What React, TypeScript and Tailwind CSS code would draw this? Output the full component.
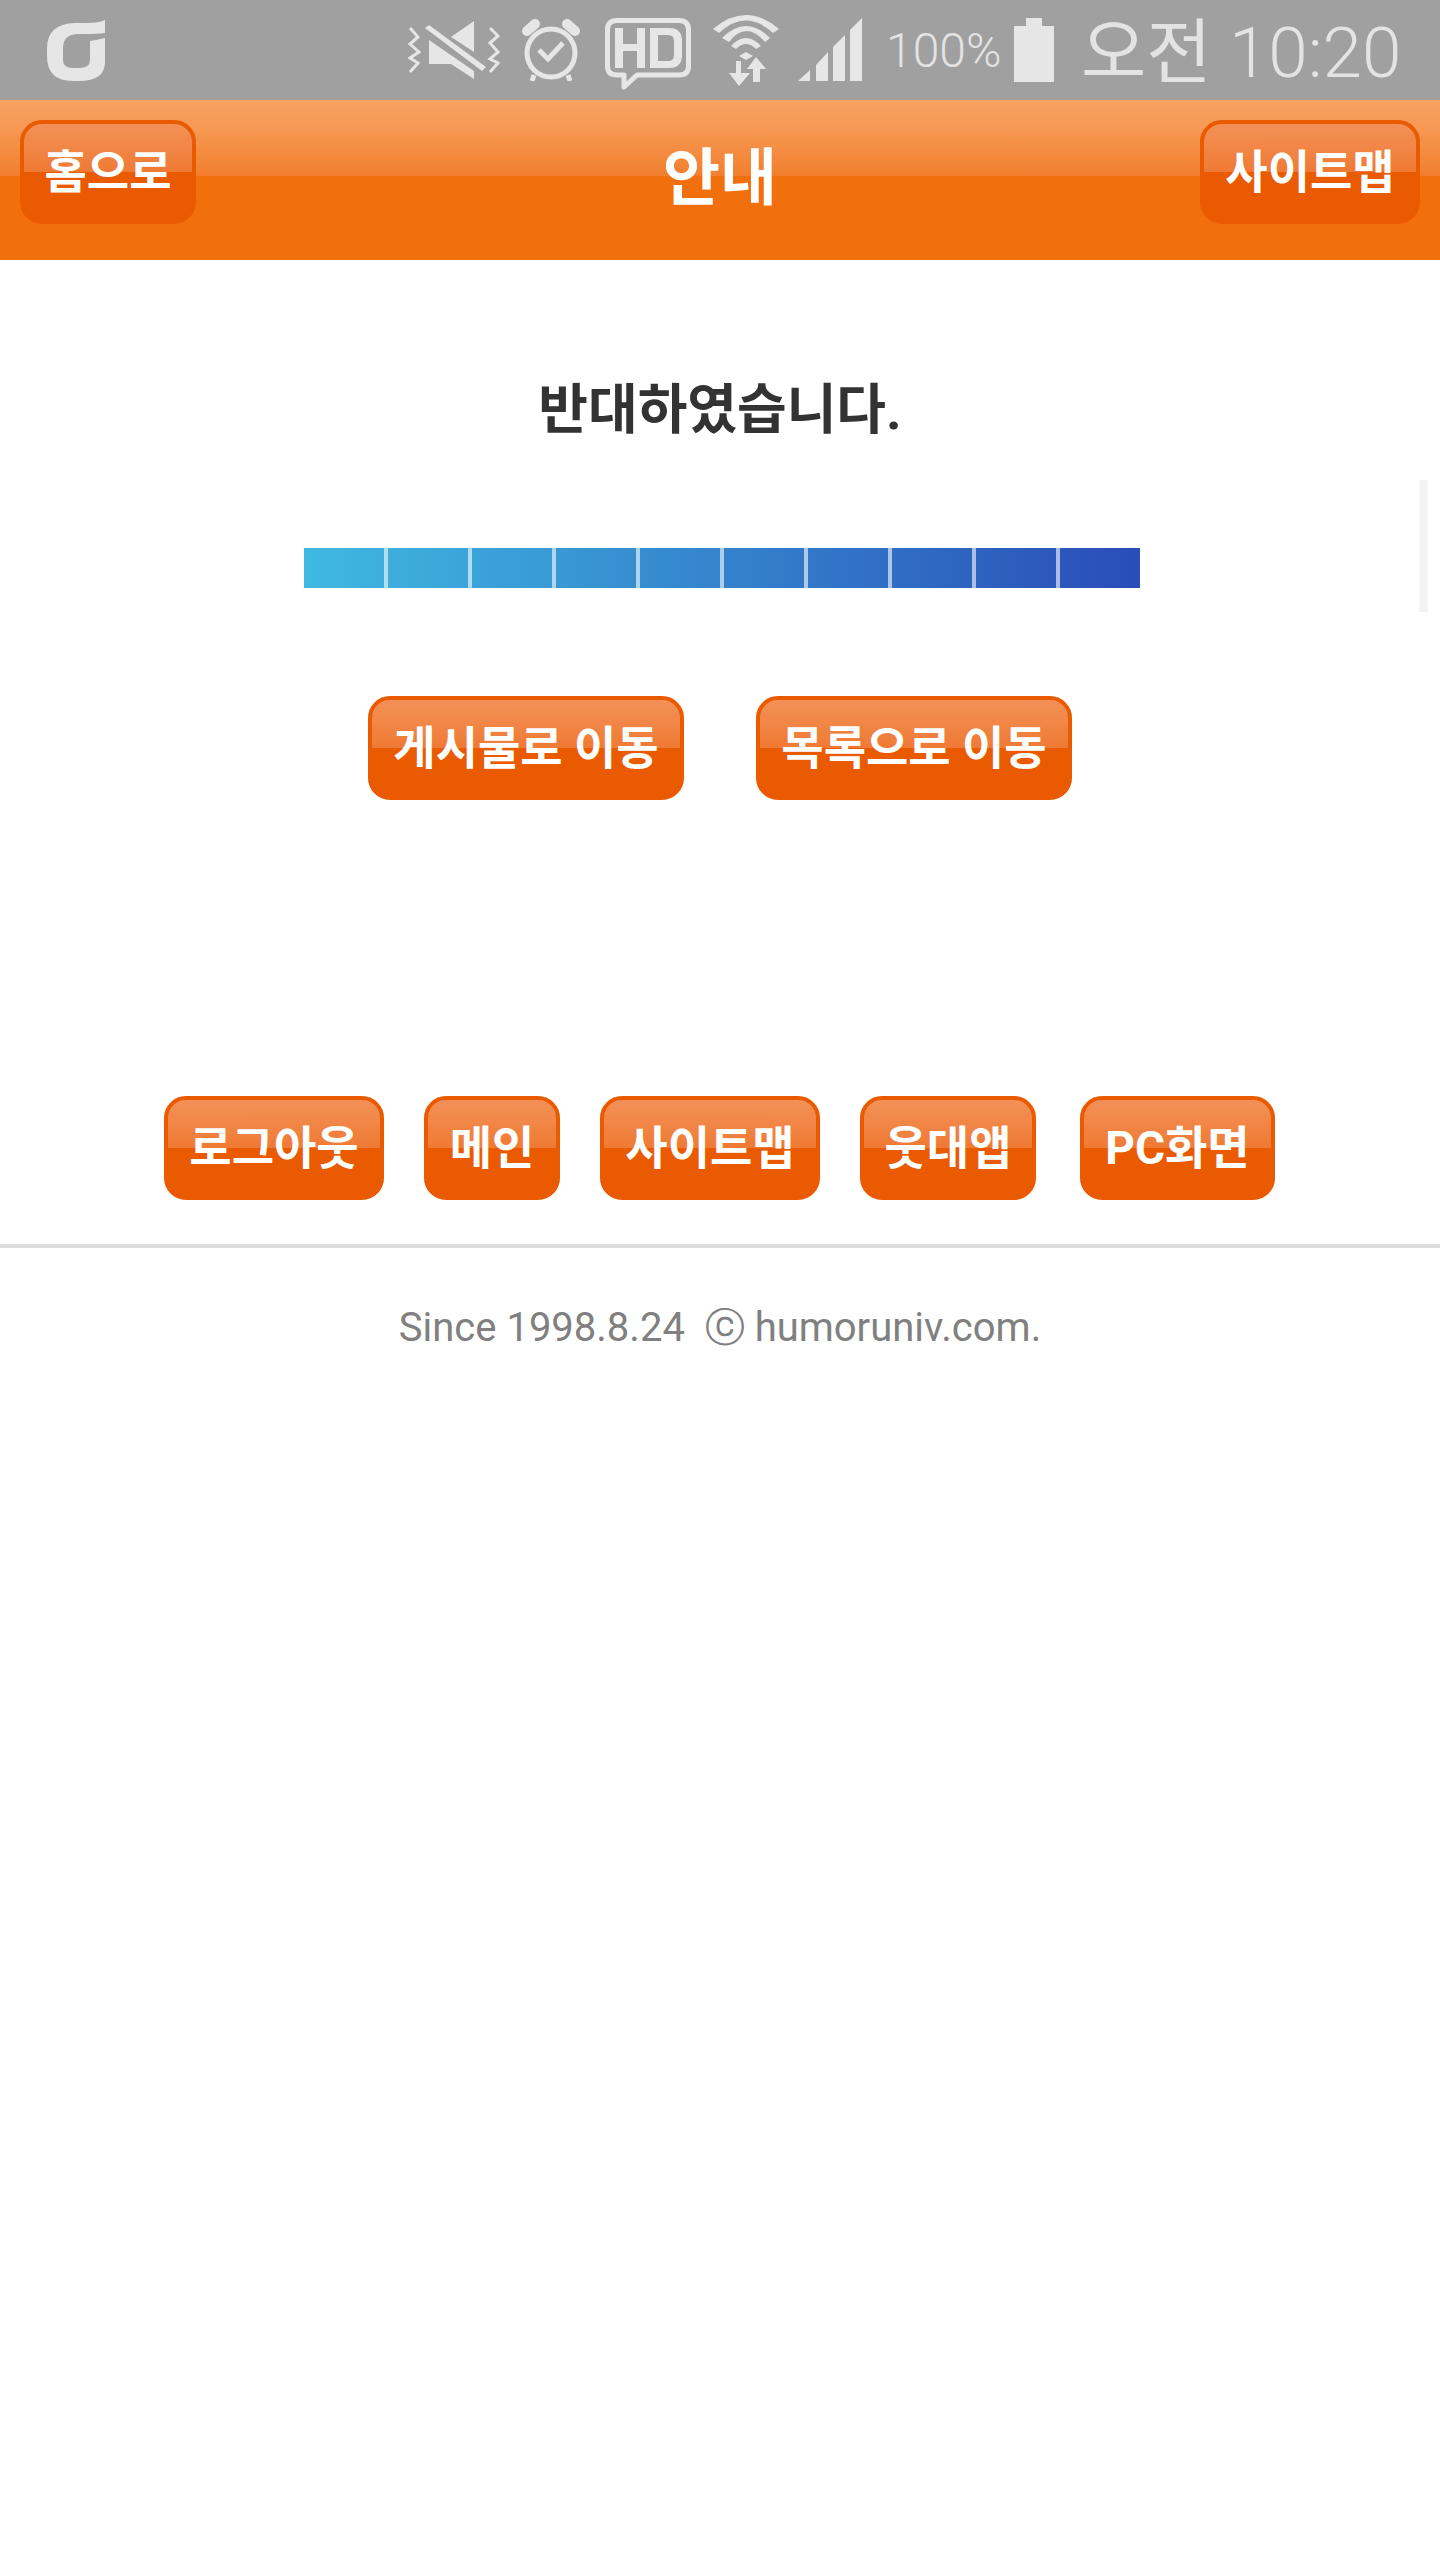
const KR = "font-['Roboto','Noto_Sans_CJK_KR','Noto_Sans',sans-serif]";

function OrangeButton({ label, className }: { label: string; className: string }) {
  return (
    <div
      className={`flex h-[104px] items-center justify-center rounded-[22px] border-4 border-[#ea5a00] bg-[linear-gradient(to_bottom,#f39158_0%,#ef7a34_48px,#ea5a00_48px,#ea5a00_100%)] text-[46px] font-bold leading-none text-white ${KR} ${className}`}
    >
      {label}
    </div>
  );
}

function StatusIcons() {
  return (
    <div className="flex items-center">
      <svg width="92" height="60" viewBox="0 0 92 60" fill="#e6e6e6" className="ml-[408px]">
        <path d="M66 1 V32 L43 17 Z" />
        <path d="M21 20 L66 51 V59 L43 44 H21 Z" />
        <path d="M17 8 L21 5 L78 47 L74 51 Z" />
        <path d="M2 8 L10 17 L2 24 L11 32 L2 38 L10 43 L2 52" fill="none" stroke="#e6e6e6" strokeWidth="3" />
        <path d="M82 8 L90 16 L82 23 L90 32 L82 39 L90 43 L82 52" fill="none" stroke="#e6e6e6" strokeWidth="3" />
      </svg>
      <svg width="60" height="62" viewBox="0 0 60 62" fill="none" className="ml-[21px]">
        <circle cx="30" cy="34" r="24" stroke="#e6e6e6" strokeWidth="5" />
        <path d="M6 12 L14 5 M54 12 L46 5" stroke="#e6e6e6" strokeWidth="10" strokeLinecap="round" />
        <path d="M18 31 L27 40 L42 24" stroke="#e6e6e6" strokeWidth="5" />
        <path d="M13 56 L11 62 M47 56 L49 62" stroke="#e6e6e6" strokeWidth="5" />
      </svg>
      <svg width="86" height="72" viewBox="0 0 86 72" fill="none" className="ml-[24px] mt-[8px]">
        <path d="M12 2.5 H74 Q83.5 2.5 83.5 12 V48 Q83.5 57 74 57 H32 L19 69 V57 H12 Q2.5 57 2.5 48 V12 Q2.5 2.5 12 2.5 Z" stroke="#e6e6e6" strokeWidth="5" strokeLinejoin="round" />
        <path d="M10 10 H18 V26 H32 V10 H40 V50 H32 V33 H18 V50 H10 Z" fill="#e6e6e6" />
        <path d="M45 10 H64 Q77 10 77 23 V37 Q77 50 64 50 H45 Z M53 17 V43 H63 Q69 43 69 37 V23 Q69 17 63 17 Z" fill="#e6e6e6" fillRule="evenodd" />
      </svg>
      <svg width="66" height="71" viewBox="0 0 66 71" fill="#e6e6e6" className="ml-[22px]">
        <path d="M0 14 Q33 -14 66 14 L60 18 Q33 -7 6 18 Z" />
        <path d="M9 23 Q33 -1 57 23 L52 27 Q33 5 16 27 Z" />
        <path d="M18 31 Q33 15 48 31 L43 34 Q33 24 23 34 Z" />
        <path d="M26 41 L33 37 L40 41 L33 45 Z" />
        <path d="M23 46 H28 V58 H37 L26 71 L16 58 H23 Z" />
        <path d="M43 42 L53 54 H47 V67 H40 V54 H34 Z" />
      </svg>
      <svg width="64" height="64" viewBox="0 0 64 64" fill="#e6e6e6" className="ml-[19px]">
        <path d="M0 63 L12 52 V63 Z" />
        <path d="M18 47 L30 34 V63 H18 Z" />
        <path d="M35 29 L47 17 V63 H35 Z" />
        <path d="M52 12 L64 0 V63 H52 Z" />
      </svg>
      <span className="ml-[24px] mt-[2px] w-[128px] font-['Roboto',sans-serif] text-[48px] font-light leading-none text-[#e3e3e3]">100%</span>
      <svg width="40" height="64" viewBox="0 0 40 64" fill="#e6e6e6">
        <path d="M12 0 H28 V8 H40 V64 H0 V8 H12 Z" />
      </svg>
      <span className="ml-[27px] mt-[5px] font-['Roboto','Noto_Sans_CJK_KR',sans-serif] text-[71px] font-light leading-none text-[#e3e3e3]">
        <span className="font-normal">오전</span> 10:20
      </span>
    </div>
  );
}

function StatusBar() {
  return (
    <div className="relative flex h-[100px] items-center bg-[#a0a0a0]">
      <svg width="58" height="61" viewBox="0 0 58 61" fill="#e6e6e6" className="absolute left-[47px] top-[20px]">
        <path d="M58 0 V13 Q50 14 36 14 L30 14 Q16 15 16 28 V40 Q16 48 26 48 H32 Q43 48 43 40 V21 Q50 20 58 18 V42 Q58 61 32 61 H26 Q0 61 0 36 V28 Q0 4 28 3 H40 Q52 3 58 0 Z" />
      </svg>
      <StatusIcons />
    </div>
  );
}

export default function App() {
  return (
    <div className={`relative min-h-[2560px] bg-white ${KR}`}>
      <StatusBar />
      <header className="grid h-[160px] grid-cols-[1fr_auto_1fr] items-start bg-[linear-gradient(to_bottom,#f6a362_0%,#f69a56_25px,#f27f2e_76px,#f26f0e_76px,#f26f0e_100%)] px-5 pt-5">
        <OrangeButton label="홈으로" className="w-[176px]" />
        <h1 className="mt-[11px] text-[62px] font-bold leading-[96px] text-white">안내</h1>
        <OrangeButton label="사이트맵" className="w-[220px] justify-self-end" />
      </header>

      <main className="flex flex-col items-center">
        <h2 className="mt-[113px] text-[54px] font-bold leading-[76px] text-[#333333]">반대하였습니다.</h2>
        <div className="ml-1 mt-[99px] flex h-10 w-[836px] bg-[linear-gradient(to_right,#3fb9e1,#2a4db8)]">
          {Array.from({ length: 9 }).map((_, i) => (
            <div key={i} className="h-full w-[84px] shrink-0 border-r-4 border-[#ffffff99]" />
          ))}
        </div>
        <div className="mt-[108px] flex gap-[72px]">
          <OrangeButton label="게시물로 이동" className="w-[316px]" />
          <OrangeButton label="목록으로 이동" className="w-[316px]" />
        </div>
        <div className="mr-[1px] mt-[296px] flex gap-10">
          <OrangeButton label="로그아웃" className="w-[220px]" />
          <OrangeButton label="메인" className="w-[136px]" />
          <OrangeButton label="사이트맵" className="w-[220px]" />
          <OrangeButton label="웃대앱" className="w-[176px]" />
          <OrangeButton label="PC화면" className="ml-1 w-[195px]" />
        </div>
      </main>

      <footer className="mt-11 border-t-4 border-[#dddddd] pt-[52px] text-center font-['Roboto',sans-serif] text-[40px] leading-[56px] text-[#808080]">
        Since 1998.8.24&nbsp; ⓒ humoruniv.com.
      </footer>

      <div className="absolute left-[1418px] top-[480px] h-[132px] w-[11px] bg-[linear-gradient(to_right,#ffffff,#f2f2f2_25%,#f2f2f2_75%,#ffffff)]" />
    </div>
  );
}
